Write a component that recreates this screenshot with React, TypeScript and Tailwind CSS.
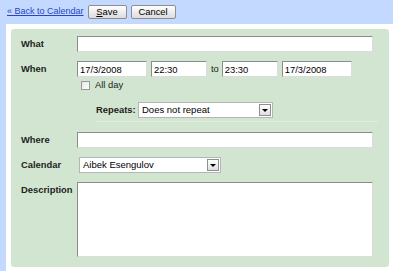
import React from 'react';

const inputCls =
  'h-[16px] bg-white border border-t-[#8c8c8c] border-l-[#8c8c8c] border-r-[#dcdcdc] border-b-[#dcdcdc] px-[2px] text-[9.4px] text-black outline-none';

function Select({ value, width }: { value: string; width: string }) {
  return (
    <div className={`h-[16px] ${width} bg-white border border-[#b5b5b5] flex items-center justify-between pl-[3px] pr-[1px]`}>
      <span className="text-[9.5px] text-black leading-none">{value}</span>
      <span className="w-[12px] h-[12px] border border-[#8f8f8f] bg-gradient-to-b from-white to-[#dedede] flex items-center justify-center">
        <span className="w-0 h-0 border-l-[3px] border-r-[3px] border-t-[3px] border-l-transparent border-r-transparent border-t-black" />
      </span>
    </div>
  );
}

function Label({ children }: { children: React.ReactNode }) {
  return <div className="w-[56px] shrink-0 font-bold text-[9.4px] text-[#222]">{children}</div>;
}

export default function App() {
  return (
    <div className="w-[395px] h-[271px] bg-white overflow-hidden" style={{ fontFamily: '"Liberation Sans", Arial, sans-serif' }}>
      {/* top bar */}
      <div className="w-[393px] h-[24px] bg-[#c3d9ff] flex items-center pl-[7px]">
        <a href="#" className="whitespace-nowrap text-[9px] text-[#2a45c4] underline">« Back to Calendar</a>
        <button className="ml-[4px] w-[39px] h-[14px] rounded-[2px] border border-[#8e8e8e] bg-gradient-to-b from-white to-[#dcdcdc] text-[9.4px] leading-none text-black">
          <u>S</u>ave
        </button>
        <button className="ml-[4px] w-[45px] h-[14px] rounded-[2px] border border-[#8e8e8e] bg-gradient-to-b from-white to-[#dcdcdc] text-[9.4px] leading-none text-black">
          Cancel
        </button>
      </div>

      <div className="flex h-[247px]">
        <div className="w-[6px] bg-[#c3d9ff]" />
        <div className="pl-[5px] pt-[5px]">
          <div className="w-[378px] bg-[#d2e5d0] rounded-[3px] pl-[10px] pr-[16px] pt-[7px] pb-[10px] flex flex-col">
            {/* What */}
            <div className="flex items-center h-[16px]">
              <Label>What</Label>
              <input className={`${inputCls} flex-1`} defaultValue="" />
            </div>

            {/* When */}
            <div className="flex items-center h-[16px] mt-[9px]">
              <Label>When</Label>
              <input className={`${inputCls} w-[70px]`} defaultValue="17/3/2008" />
              <input className={`${inputCls} w-[56px] ml-[4px]`} defaultValue="22:30" />
              <span className="text-[9.4px] text-[#222] ml-[4px] mr-[3px]">to</span>
              <input className={`${inputCls} w-[56px]`} defaultValue="23:30" />
              <input className={`${inputCls} w-[70px] ml-[4px]`} defaultValue="17/3/2008" />
            </div>

            {/* All day */}
            <div className="flex items-center h-[10px] mt-[3px] pl-[60px]">
              <span className="w-[9px] h-[9px] border border-[#9a9a9a] bg-gradient-to-br from-[#e6e6e6] to-white" />
              <span className="ml-[5px] text-[9.4px] text-[#222]">All day</span>
            </div>

            {/* Repeats */}
            <div className="flex items-center h-[16px] mt-[12px] pl-[75px]">
              <span className="font-bold text-[9.4px] text-[#222] w-[42px]">Repeats:</span>
              <Select value="Does not repeat" width="w-[135px]" />
            </div>

            <div className="h-px bg-[#e3eee1] mt-[3px] ml-[75px] -mr-[5px]" />

            {/* Where */}
            <div className="flex items-center h-[16px] mt-[10px]">
              <Label>Where</Label>
              <input className={`${inputCls} flex-1`} defaultValue="" />
            </div>

            {/* Calendar */}
            <div className="flex items-center h-[16px] mt-[9px]">
              <Label>Calendar</Label>
              <div className="ml-[2px]">
                <Select value="Aibek Esengulov" width="w-[142px]" />
              </div>
            </div>

            {/* Description */}
            <div className="flex mt-[9px]">
              <div className="pt-[1px]">
                <Label>Description</Label>
              </div>
              <textarea className="flex-1 h-[75px] bg-white border border-t-[#8c8c8c] border-l-[#8c8c8c] border-r-[#dcdcdc] border-b-[#dcdcdc] resize-none outline-none" />
            </div>
          </div>
        </div>
      </div>
    </div>
  );
}
